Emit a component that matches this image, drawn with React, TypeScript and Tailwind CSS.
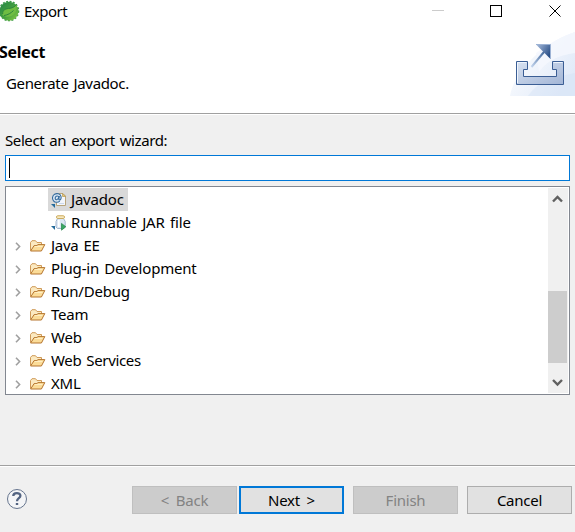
import type { ReactNode } from 'react';

const FolderIcon = () => (
  <svg width="16" height="14" viewBox="0 0 16 14" className="shrink-0">
    <path d="M.5 11.5V3.5L2 1.7H5.5L7 3.5H11.5V6" fill="#fbe9c0" stroke="#cf9a58" />
    <path d="M.6 12L4.2 6.5H7L8 5.6H14.8L11.4 12Z" fill="#fbdc98" stroke="#b5752f" />
    <path d="M5 7.4H12.5" stroke="#fff0c8" />
  </svg>
);

const JavadocIcon = () => (
  <svg width="16" height="16" viewBox="0 0 16 16" className="shrink-0">
    <path d="M5.5 1.5H12L14.5 4V13.5H5.5Z" fill="#f3f6fb" stroke="#b8a57c" />
    <path d="M11.5 1.5V4.5H14.5Z" fill="#e5c878" stroke="#b99a50" strokeWidth=".7" />
    <path d="M8 11.5H13" stroke="#ccd9ec" />
    <circle cx="5.8" cy="6" r="4.6" fill="#dce8f4" />
    <path d="M8.8 9.2C7 10.7 4 10.6 2.5 8.8C.7 6.7 1.3 3.7 3.6 2.3C6 .9 9.2 1.8 10 4.4C10.5 6.5 9.6 8 8.5 7.9C7.7 7.8 7.8 7 8 6.2L8.4 4M7.8 5.2C7.5 3.6 5.3 3.5 4.5 5.1C3.7 6.7 4.5 8 5.7 7.7C6.8 7.5 7.6 6.3 7.8 5.2Z" fill="none" stroke="#356b9d" strokeWidth="1.1" />
    <path d="M0 12H4V16Z" fill="#256b9b" />
  </svg>
);

const JarIcon = () => (
  <svg width="16" height="16" viewBox="0 0 16 16" className="shrink-0">
    <path d="M6.5 3.5H12.5L14.2 6.5V12L12.5 13.5H6.5L5 12V6.5Z" fill="#dce7f4" stroke="#a3b6cc" />
    <path d="M7.8 5V12" stroke="#fff" strokeWidth="1.8" />
    <rect x="5.5" y=".8" width="8" height="2.6" rx="1.2" fill="#fcf0cb" stroke="#c9a654" />
    <path d="M10.5 8.4L14.8 11.8L10.5 15.2Z" fill="#3aa862" stroke="#238348" strokeWidth=".7" />
    <path d="M0 11H4V15Z" fill="#256b9b" />
  </svg>
);

const SpringIcon = () => (
  <svg width="20" height="22" viewBox="0 0 20 22" className="shrink-0">
    <defs>
      <linearGradient id="leafDisc" x1="0" y1="0" x2="1" y2="1">
        <stop stopColor="#238447" />
        <stop offset=".55" stopColor="#46a23f" />
        <stop offset="1" stopColor="#8ccc43" />
      </linearGradient>
    </defs>
    <circle cx="9" cy="11" r="9.6" fill="none" stroke="#3c9b49" strokeWidth="1.4" strokeDasharray="2 1.5" />
    <circle cx="9" cy="11.3" r="9.5" fill="url(#leafDisc)" />
    <path d="M2.5 15C2 10 5 8.6 10 8.3C13 8 15 6.6 16.5 4.5C18 11 14 17 7 16.7C5 16.6 4 16 2.5 15Z" fill="#6fbd42" />
    <path d="M4 15.5C8 15 11 13 13.5 10.5M2.7 14C2.3 9.6 6 8.6 10 8.3C13 7.8 15 6.4 16.5 4.5" fill="none" stroke="#2b843e" />
  </svg>
);

const ExportBanner = () => (
  <svg width="65" height="65" viewBox="0 0 65 65" className="shrink-0">
    <defs>
      <linearGradient id="sky" x1="0" y1="0" x2="1" y2=".6">
        <stop stopColor="#fff" />
        <stop offset="1" stopColor="#e2ebf9" />
      </linearGradient>
      <linearGradient id="tray" x1="0" y1="0" x2="1" y2="1">
        <stop stopColor="#d8e2f1" />
        <stop offset="1" stopColor="#a2b5d6" />
      </linearGradient>
      <linearGradient id="shaft" x1="0" y1="1" x2="1" y2="0">
        <stop stopColor="#c3d5ee" />
        <stop offset="1" stopColor="#31598f" />
      </linearGradient>
      <linearGradient id="head" x1="0" y1="0" x2="1" y2=".6">
        <stop stopColor="#a9bddd" />
        <stop offset="1" stopColor="#2c5189" />
      </linearGradient>
    </defs>
    <path d="M0 65C3 44 29 13 65 1V65Z" fill="url(#sky)" />
    <path d="M18 65C30 48 45 46 65 42V65Z" fill="#d3e1f6" opacity=".4" />
    <path d="M26 22C40 12 51 6 65 1V22C49 24 38 29 29 41Z" fill="#f5f8fe" opacity=".8" />
    <path d="M6.5 30.5H17.5V38.5H13.5V45.5H46.5V38.5H42.5V30.5H53.5V53.5H6.5Z" fill="url(#tray)" stroke="#3b5e95" />
    <path d="M7.5 52V31.5H16.5M43.5 31.5H52.5" fill="none" stroke="#eff5fd" />
    <path d="M21.5 36L36 18.5" stroke="url(#shaft)" strokeWidth="2" />
    <path d="M26 13.5H40.5V28Z" fill="url(#head)" />
    <path d="M26 13.5H40.5V28" fill="none" stroke="#9db3d5" />
  </svg>
);

const folders = [
  ['Java EE', 'tracking-[-0.3px]'],
  ['Plug-in Development', 'tracking-[-0.2px]'],
  ['Run/Debug', 'tracking-[-0.2px]'],
  ['Team', 'tracking-[-0.2px]'],
  ['Web', 'tracking-[-0.2px]'],
  ['Web Services', 'tracking-[-0.35px]'],
  ['XML', 'tracking-[-0.2px]'],
];

const Button = ({ children, look }: { children: ReactNode; look: string }) => (
  <button className={`flex h-7 w-[105px] items-center justify-center whitespace-pre text-[15px] leading-5 tracking-[-0.25px] [word-spacing:3px] ${look}`}>
    {children}
  </button>
);

export default function App() {
  return (
    <div className="flex h-[532px] w-[575px] flex-col overflow-hidden bg-[#f0f0f0] font-['Noto_Sans','Open_Sans',sans-serif] text-[15px] leading-5 text-black [word-spacing:1.5px]">
      <header className="flex h-[113px] shrink-0 flex-col bg-white">
        <div className="flex h-[31px] shrink-0 items-start">
          <SpringIcon />
          <span className="ml-1 mt-px grow tracking-[-0.5px]">Export</span>
          <svg width="143" height="24" viewBox="432 0 143 24" fill="none" shapeRendering="crispEdges">
            <path d="M432 10.5H444" stroke="#ccc" />
            <rect x="490.5" y="5.5" width="11" height="11" stroke="#000" />
            <path d="M549.5 5.5L560.5 16.5M560.5 5.5L549.5 16.5" stroke="#000" shapeRendering="auto" />
          </svg>
        </div>
        <div className="flex justify-between">
          <div className="pt-[11px]">
            <h1 className="-ml-px text-[16px] font-bold leading-5 tracking-[-0.3px]">Select</h1>
            <p className="ml-1.5 mt-[11px] tracking-[-0.35px]">Generate Javadoc.</p>
          </div>
          <ExportBanner />
        </div>
      </header>
      <div className="h-0.5 shrink-0 border-b border-t border-b-white border-t-[#a0a0a0]" />
      <main className="flex h-[350px] shrink-0 flex-col px-[5px] pt-[15px]">
        <label className="mb-[5px] h-5 tracking-[-0.4px]">Select an export wizard:</label>
        <div className="flex h-[26px] w-[565px] shrink-0 items-center border border-[#0078d7] bg-white pl-[3px]">
          <span className="h-5 w-px bg-black" />
        </div>
        <div className="mt-[5px] flex h-[209px] w-[565px] shrink-0 justify-between border border-[#828790] bg-white p-px">
          <div className="overflow-hidden">
            <div className="ml-[41px] flex h-[23px] w-20 items-center bg-[#d9d9d9] pl-[3px]">
              <JavadocIcon />
              <span className="mb-0.5 ml-1 tracking-[-0.2px]">Javadoc</span>
            </div>
            <div className="ml-[41px] flex h-[23px] items-center pl-[3px]">
              <JarIcon />
              <span className="mb-0.5 ml-1 tracking-[-0.15px]">Runnable JAR file</span>
            </div>
            {folders.map(([name, spacing]) => (
              <div key={name} className="flex h-[23px] items-center pl-2">
                <svg width="6" height="9" viewBox="0 0 6 9" className="mr-[9px] mt-0.5" fill="none">
                  <path d="M1 .8L4.6 4.5L1 8.2" stroke="#a0a0a0" strokeWidth="1.6" />
                </svg>
                <FolderIcon />
                <span className={`mb-0.5 ml-[5px] whitespace-nowrap ${spacing}`}>{name}</span>
              </div>
            ))}
          </div>
          <div className="flex w-5 flex-col bg-[#f0f0f0]">
            <svg width="20" height="103" viewBox="0 0 20 103" fill="none">
              <path d="M5 13.5L9.5 9L14 13.5" stroke="#606060" strokeWidth="2.4" />
            </svg>
            <div className="h-[72px] w-[19px] bg-[#cdcdcd]" />
            <svg width="20" height="30" viewBox="0 0 20 30" fill="none">
              <path d="M5 17L9.5 21.5L14 17" stroke="#606060" strokeWidth="2.4" />
            </svg>
          </div>
        </div>
      </main>
      <div className="h-0.5 shrink-0 border-b border-t border-b-white border-t-[#a0a0a0]" />
      <footer className="flex grow items-start pl-1.5 pt-[19px]">
        <svg width="22" height="22" viewBox="0 0 22 22" className="mr-[104px] mt-0.5" fill="none">
          <circle cx="11" cy="11" r="9.5" fill="#f4f5f7" stroke="#66758e" />
          <path d="M7.3 8C7.3 4.1 14.4 4.1 14.4 7.8C14.4 10.2 11 10.3 11 13.2" stroke="#536482" strokeWidth="2.3" />
          <rect x="9.8" y="15" width="2.4" height="2" fill="#536482" />
        </svg>
        <Button look="mr-0.5 border border-[#bfbfbf] bg-[#ccc] text-[#838383]">{'< Back'}</Button>
        <Button look="mr-[9px] border-2 border-[#0078d7] bg-[#e1e1e1]">{'Next >'}</Button>
        <Button look="mr-[9px] border border-[#bfbfbf] bg-[#ccc] text-[#838383]">Finish</Button>
        <Button look="border border-[#adadad] bg-[#e1e1e1]">Cancel</Button>
      </footer>
    </div>
  );
}
